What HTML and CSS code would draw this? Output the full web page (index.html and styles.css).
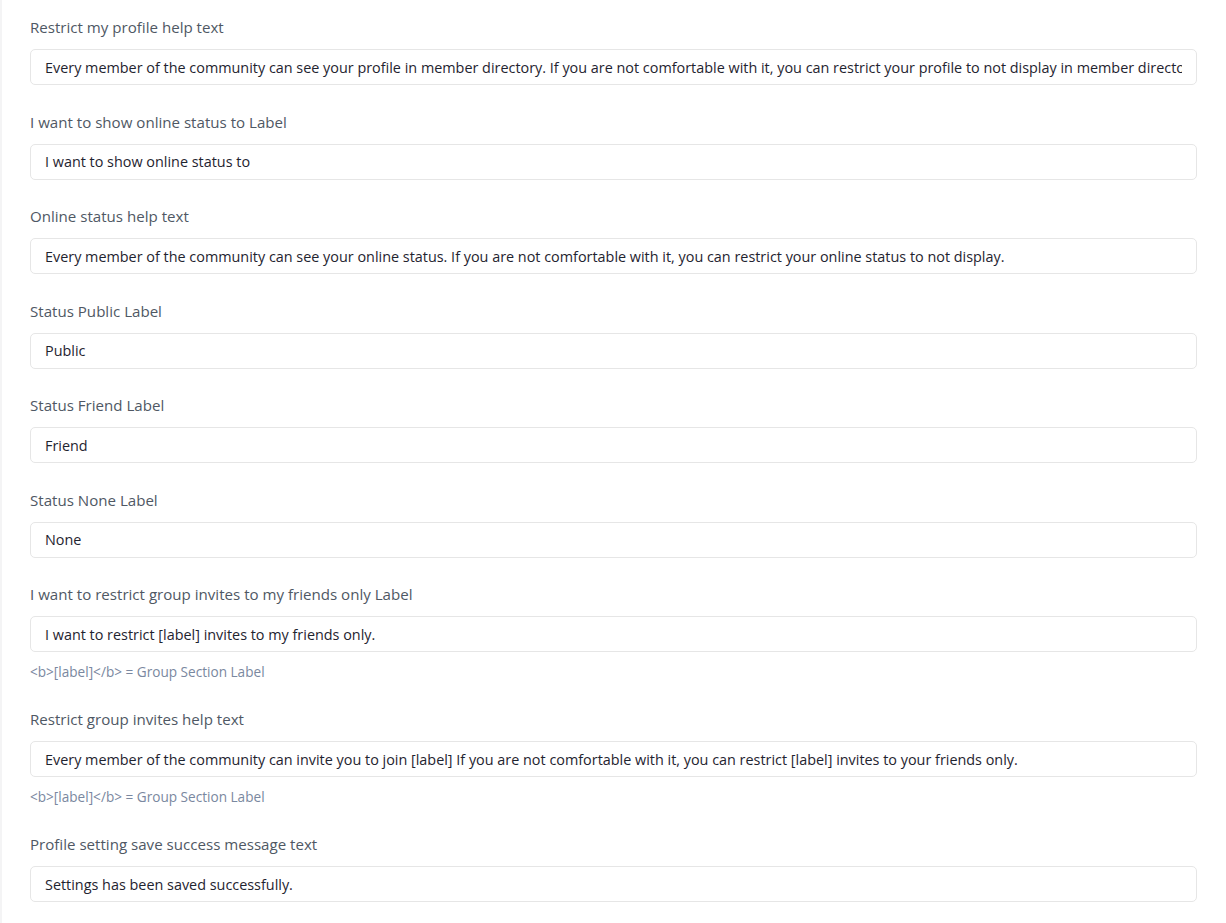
FILE: index.html
```html
<!DOCTYPE html>
<html lang="en">
<head>
<meta charset="utf-8">
<title>Profile settings</title>
<link rel="stylesheet" href="styles.css">
</head>
<body>
<div class="page">
  <form class="settings">
    <div class="field">
      <label class="field-label">Restrict my profile help text</label>
      <input class="field-input" type="text" value="Every member of the community can see your profile in member directory. If you are not comfortable with it, you can restrict your profile to not display in member directory.">
    </div>
    <div class="field">
      <label class="field-label">I want to show online status to Label</label>
      <input class="field-input" type="text" value="I want to show online status to">
    </div>
    <div class="field">
      <label class="field-label">Online status help text</label>
      <input class="field-input" type="text" value="Every member of the community can see your online status. If you are not comfortable with it, you can restrict your online status to not display.">
    </div>
    <div class="field">
      <label class="field-label">Status Public Label</label>
      <input class="field-input" type="text" value="Public">
    </div>
    <div class="field">
      <label class="field-label">Status Friend Label</label>
      <input class="field-input" type="text" value="Friend">
    </div>
    <div class="field">
      <label class="field-label">Status None Label</label>
      <input class="field-input" type="text" value="None">
    </div>
    <div class="field">
      <label class="field-label">I want to restrict group invites to my friends only Label</label>
      <input class="field-input" type="text" value="I want to restrict [label] invites to my friends only.">
      <p class="field-hint">&lt;b&gt;[label]&lt;/b&gt; = Group Section Label</p>
    </div>
    <div class="field">
      <label class="field-label">Restrict group invites help text</label>
      <input class="field-input" type="text" value="Every member of the community can invite you to join [label] If you are not comfortable with it, you can restrict [label] invites to your friends only.">
      <p class="field-hint">&lt;b&gt;[label]&lt;/b&gt; = Group Section Label</p>
    </div>
    <div class="field">
      <label class="field-label">Profile setting save success message text</label>
      <input class="field-input" type="text" value="Settings has been saved successfully.">
    </div>
  </form>
</div>
</body>
</html>
```
FILE: styles.css
```css
html, body {
  margin: 0;
  padding: 0;
  background: #ffffff;
}

body {
  font-family: "Open Sans", "Liberation Sans", sans-serif;
}

.page {
  border-left: 2px solid #f4f4f5;
  min-height: 923px;
  box-sizing: border-box;
  padding: 16px 29px 0 28px;
}

.settings {
  display: flex;
  flex-direction: column;
}

.field {
  display: flex;
  flex-direction: column;
  margin-bottom: 25.5px;
}

.field-label {
  display: block;
  font-size: 15.1px;
  line-height: 22px;
  color: #4f5864;
  margin-bottom: 11px;
}

.field-input {
  box-sizing: border-box;
  width: 100%;
  height: 36px;
  margin: 0;
  padding: 0 14px;
  border: 1px solid #e6e6e6;
  border-radius: 5px;
  background: #ffffff;
  font-family: "Open Sans", "Liberation Sans", sans-serif;
  font-size: 14.4px;
  color: #1f2430;
  outline: none;
}

.field-hint {
  margin: 10px 0 0;
  font-size: 13.6px;
  line-height: 20.5px;
  color: #7a88a0;
}
```
